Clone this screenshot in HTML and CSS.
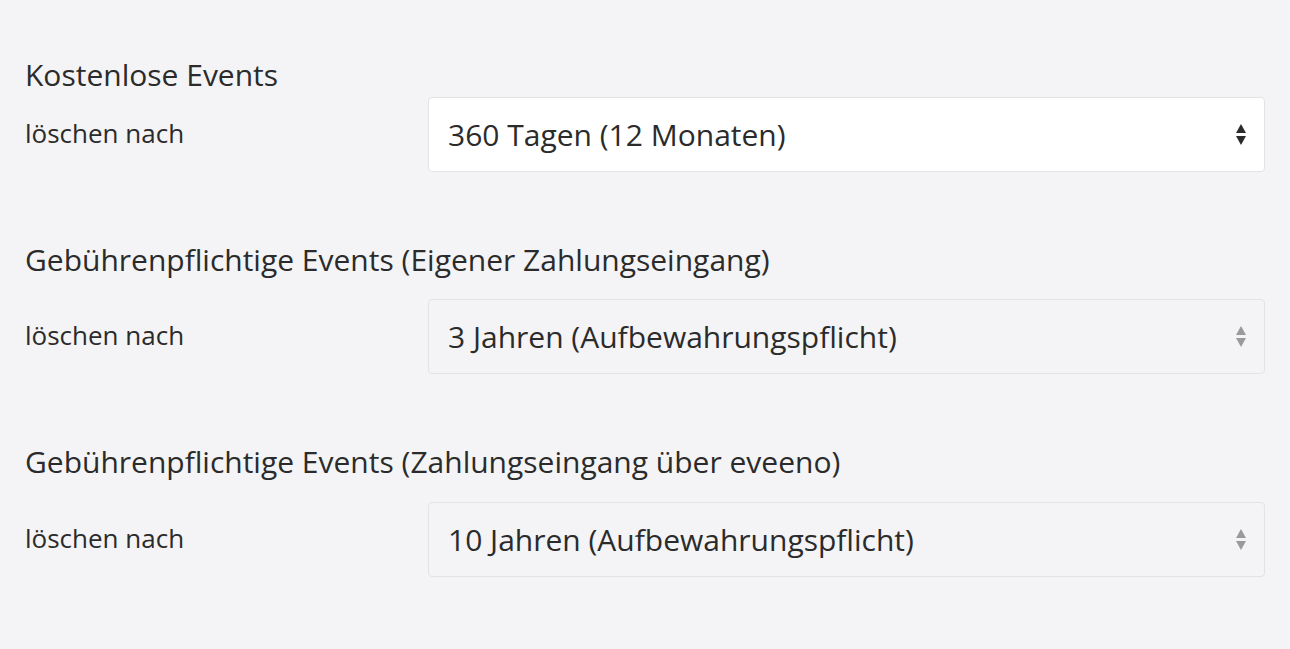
FILE: index.html
```html
<!DOCTYPE html>
<html lang="de">
<head>
<meta charset="utf-8">
<title>Löschfristen</title>
<link rel="stylesheet" href="styles.css">
</head>
<body>
<main class="page">
  <section class="group group-first">
    <h2 class="group-title">Kostenlose Events</h2>
    <div class="row">
      <label class="row-label">löschen nach</label>
      <div class="select active">
        <span class="select-value">360 Tagen (12 Monaten)</span>
        <span class="arrows"><span class="up"></span><span class="down"></span></span>
      </div>
    </div>
  </section>
  <section class="group">
    <h2 class="group-title">Gebührenpflichtige Events (Eigener Zahlungseingang)</h2>
    <div class="row">
      <label class="row-label">löschen nach</label>
      <div class="select disabled">
        <span class="select-value">3 Jahren (Aufbewahrungspflicht)</span>
        <span class="arrows"><span class="up"></span><span class="down"></span></span>
      </div>
    </div>
  </section>
  <section class="group group-last">
    <h2 class="group-title">Gebührenpflichtige Events (Zahlungseingang über eveeno)</h2>
    <div class="row">
      <label class="row-label">löschen nach</label>
      <div class="select disabled">
        <span class="select-value">10 Jahren (Aufbewahrungspflicht)</span>
        <span class="arrows"><span class="up"></span><span class="down"></span></span>
      </div>
    </div>
  </section>
</main>
</body>
</html>
```

FILE: styles.css
```css
html, body {
  margin: 0;
  padding: 0;
  background: #f4f4f6;
}
body {
  font-family: "Open Sans", "Liberation Sans", sans-serif;
  color: #2b2b2b;
}
.page {
  padding: 55px 25px 0 25px;
  display: flex;
  flex-direction: column;
}
.group {
  display: flex;
  flex-direction: column;
  margin-top: 68px;
}
.group-title {
  margin: 0 0 19px 0;
  font-size: 30px;
  font-weight: 400;
  line-height: 40px;
  color: #2b2b2b;
}
.group-first {
  margin-top: 0;
}
.group-first .group-title {
  margin-bottom: 2px;
}
.group-last .group-title {
  margin-bottom: 20px;
}
.row {
  display: flex;
  align-items: center;
}
.row-label {
  width: 403px;
  flex: none;
  font-size: 26px;
  line-height: 34px;
  padding-bottom: 4px;
  color: #2b2b2b;
}
.select {
  flex: 1;
  height: 75px;
  box-sizing: border-box;
  border: 1px solid #e3e3e6;
  border-radius: 4px;
  display: flex;
  align-items: center;
  justify-content: space-between;
  padding: 0 18px 0 19px;
}
.select.active {
  background: #ffffff;
}
.select.disabled {
  background: #f4f4f6;
}
.select-value {
  font-size: 30px;
  line-height: 40px;
  color: #2b2b2b;
}
.arrows {
  display: flex;
  flex-direction: column;
  align-items: center;
  gap: 3px;
}
.up, .down {
  width: 0;
  height: 0;
  border-left: 5.5px solid transparent;
  border-right: 5.5px solid transparent;
}
.up {
  border-bottom: 9px solid #2b2b2b;
}
.down {
  border-top: 9px solid #2b2b2b;
}
.disabled .up {
  border-bottom-color: #9a9a9c;
}
.disabled .down {
  border-top-color: #9a9a9c;
}
```
